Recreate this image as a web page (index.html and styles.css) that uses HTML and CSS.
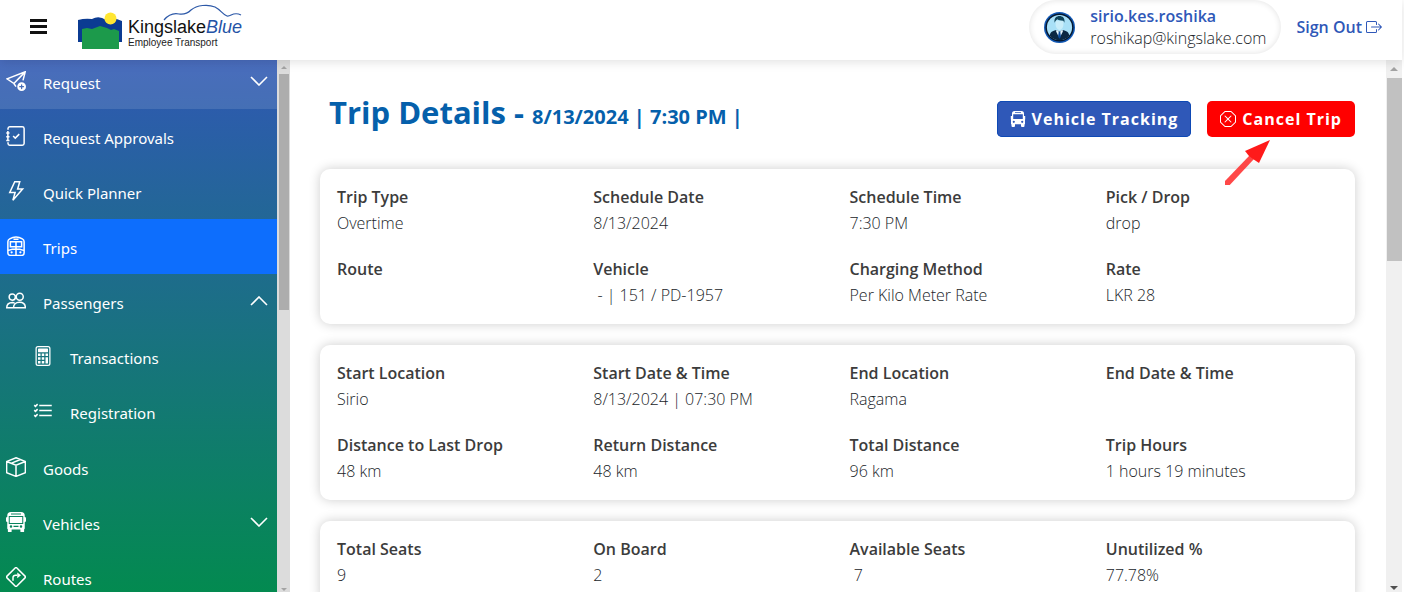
FILE: index.html
```
<!DOCTYPE html>
<html lang="en">
<head>
  <meta charset="UTF-8">
  <meta name="viewport" content="width=device-width, initial-scale=1">
  <title>Trip Details</title>
  <link rel="stylesheet" href="styles.css">
</head>
<body>
  <div class="app">
    <header class="topbar">
      <button type="button" class="menu-toggle" aria-label="Menu"><span></span><span></span><span></span></button>
      <svg class="logo" viewBox="0 0 168 46" role="img" aria-label="KingslakeBlue Employee Transport">
        <path fill="#0b3b92" d="M0 15q7-2 14-1 7-4 14 1 8-3 16 1v21H0z"/>
        <circle cx="32.500" cy="13.500" r="6" fill="#ffe632"/>
        <path fill="#1c9a4b" d="M4 24l5-1 5 1 8-3 7 2 4 2 3-1 5 2v18H4z"/>
        <path fill="none" stroke="#2d59a8" stroke-width="1.200" d="M86 15c5-6 10-7 15-6 6 1 9-1 12-4 6-5 17-6 24-3 6 3 7 7 12 9 4 1 6-5 14-1"/>
        <text class="logo-name" x="50" y="28">Kingslake<tspan class="logo-blue">Blue</tspan></text>
        <text class="logo-sub" x="50" y="41">Employee Transport</text>
      </svg>
      <div class="user">
        <svg class="avatar" viewBox="0 0 32 32" aria-hidden="true">
          <circle cx="16" cy="16" r="16" fill="#1158b5"/>
          <circle cx="16" cy="16" r="14.500" fill="#06182e"/>
          <circle cx="16" cy="16" r="13" fill="#a9e0f7"/>
          <path fill="#0b2742" d="M6 24.500c0-4 3-5 7-6l3 2 3-2c4 1 7 2 7 6a13 13 0 0 1-20 0z"/>
          <path fill="#e8f7fd" d="M13 18l3 3 3-3 .5 2-2.500 5h-2l-2.500-5z"/>
          <path fill="#0a4a9c" d="M15.200 20.500h1.600l.7 5-1.500 2-1.500-2z"/>
          <path fill="#c9edfa" d="M12 9h8v4c0 3-2 5.500-4 5.500S12 16 12 13z"/>
          <path fill="#0f4258" d="M11 11c-1-5 2-7 5-7s6 2 5 7l-1-2c-3 0-5-.5-6-1.500-1 .5-2 1-3 3.500z"/>
        </svg>
        <div class="user-text">
          <strong class="user-name">sirio.kes.roshika</strong>
          <span class="user-mail">roshikap@kingslake.com</span>
        </div>
      </div>
      <a class="sign-out" href="#">Sign Out
        <svg class="icon-sm" viewBox="0 0 16 16" aria-hidden="true"><path fill-rule="evenodd" d="M10 12.500a.5.5 0 0 1-.5.5h-8a.5.5 0 0 1-.5-.5v-9a.5.5 0 0 1 .5-.5h8a.5.5 0 0 1 .5.5v2a.5.5 0 0 0 1 0v-2A1.500 1.500 0 0 0 9.500 2h-8A1.500 1.500 0 0 0 0 3.500v9A1.500 1.500 0 0 0 1.500 14h8a1.500 1.500 0 0 0 1.500-1.500v-2a.5.5 0 0 0-1 0z"/><path fill-rule="evenodd" d="M15.854 8.354a.5.5 0 0 0 0-.708l-3-3a.5.5 0 0 0-.708.708L14.293 7.500H5.500a.5.5 0 0 0 0 1h8.793l-2.147 2.146a.5.5 0 0 0 .708.708z"/></svg>
      </a>
    </header>

    <div class="body">
      <nav class="sidebar" aria-label="Main">
        <ul class="nav">
          <li><a class="nav-link hover" href="#">
            <svg class="icon" viewBox="0 0 16 16" aria-hidden="true"><path class="line" d="M8 12.500 6.300 10 .8 6.300 15.400.6 13.600 7.500M6.300 10l9-9.300"/><path d="M16 12.500a3.500 3.500 0 1 1-7 0 3.500 3.500 0 0 1 7 0m-3.500-2a.5.5 0 0 0-.5.5v1h-1a.5.5 0 0 0 0 1h1v1a.5.5 0 0 0 1 0v-1h1a.5.5 0 0 0 0-1h-1v-1a.5.5 0 0 0-.5-.5"/></svg>
            <span>Request</span>
            <svg class="chevron" viewBox="0 0 18 10" aria-hidden="true"><path d="M1 1l8 8 8-8"/></svg>
          </a></li>
          <li><a class="nav-link" href="#">
            <svg class="icon" viewBox="0 0 16 16" aria-hidden="true"><path class="line" d="M1.600 3V2A1.500 1.500 0 0 1 3 .6h10A1.500 1.500 0 0 1 14.500 2v12a1.500 1.500 0 0 1-1.500 1.400H3A1.500 1.500 0 0 1 1.600 14v-1M5.700 8l1.700 1.700 3.200-3.200M.2 5.500h2.600M.2 8.500h2.600M.2 11.500h2.600M1.500 4v8"/></svg>
            <span>Request Approvals</span>
          </a></li>
          <li><a class="nav-link" href="#">
            <svg class="icon" viewBox="0 0 16 16" aria-hidden="true"><path class="line" d="M7 .6h4L9.300 6.400h4L5.500 15.400 7.300 9.200H3z"/></svg>
            <span>Quick Planner</span>
          </a></li>
          <li><a class="nav-link active" href="#" aria-current="page">
            <svg class="icon" viewBox="0 0 16 16" aria-hidden="true"><path class="line" d="M3.500 15.500a2 2 0 0 1-2-2V4.600c0-1 .4-1.800 1.400-2.300C6.500.1 9.500.1 13.100 2.300c1 .5 1.400 1.300 1.400 2.300v8.900a2 2 0 0 1-2 2zM8 4.500V15M3.500 4.500h9v4h-9zM6 2.600h4M2 11.500c4-1.500 8-1.500 12 0"/><circle cx="4.500" cy="13" r=".9"/><circle cx="11.500" cy="13" r=".9"/></svg>
            <span>Trips</span>
          </a></li>
          <li>
            <a class="nav-link" href="#">
              <svg class="icon" viewBox="0 0 16 16" aria-hidden="true"><path class="line" d="M5 2.300a2.500 2.500 0 1 0 0 5 2.500 2.500 0 0 0 0-5zM11 1.800a2.800 2.800 0 1 0 0 5.600 2.800 2.800 0 0 0 0-5.600zM6 13.400h9.500c0-2.500-1.700-4.400-4.700-4.400S6 10.900 6 13.400zM6 13.400H.6c0-2.300 1.400-4.100 4.600-4.200l1.700.3"/></svg>
              <span>Passengers</span>
              <svg class="chevron" viewBox="0 0 18 10" aria-hidden="true"><path d="M1 9l8-8 8 8"/></svg>
            </a>
            <ul class="subnav">
              <li><a class="nav-link" href="#">
                <svg class="icon" viewBox="0 0 16 16" aria-hidden="true"><path d="M12 1a1 1 0 0 1 1 1v12a1 1 0 0 1-1 1H4a1 1 0 0 1-1-1V2a1 1 0 0 1 1-1zM4 0a2 2 0 0 0-2 2v12a2 2 0 0 0 2 2h8a2 2 0 0 0 2-2V2a2 2 0 0 0-2-2z"/><path d="M4 2.500a.5.5 0 0 1 .5-.5h7a.5.5 0 0 1 .5.5v2a.5.5 0 0 1-.5.5h-7a.5.5 0 0 1-.5-.5zM4 6h2v2H4zm3 0h2v2H7zm3 0h2v2h-2zM4 9h2v2H4zm3 0h2v2H7zm-3 3h2v2H4zm3 0h2v2H7zm3-3h2v5h-2z"/></svg>
                <span>Transactions</span>
              </a></li>
              <li><a class="nav-link" href="#">
                <svg class="icon" viewBox="0 0 16 16" aria-hidden="true"><path class="line" d="M5 3.500h10M5 7.500h10M5 11.500h10M1 3.300l1 1 1.700-1.800M1 7.300l1 1 1.700-1.800M1 11.300l1 1 1.700-1.800"/></svg>
                <span>Registration</span>
              </a></li>
            </ul>
          </li>
          <li><a class="nav-link" href="#">
            <svg class="icon" viewBox="0 0 16 16" aria-hidden="true"><path class="line" d="M8 .6l7.500 3v9L8 15.500.5 12.600v-9zM.5 3.600 8 6.500l7.500-2.900M8 6.500v9M4.400 4.900l7.200-2.900"/></svg>
            <span>Goods</span>
          </a></li>
          <li><a class="nav-link" href="#">
            <svg class="icon" viewBox="0 0 16 16" aria-hidden="true"><path fill-rule="evenodd" d="M4 0h8a3 3 0 0 1 3 3v1a1 1 0 0 1 1 1v2a1 1 0 0 1-1 1v5a1 1 0 0 1-.5.866V15.500a.5.5 0 0 1-.5.500h-2a.5.5 0 0 1-.5-.5V14h-7v1.500a.5.5 0 0 1-.5.500H2a.5.5 0 0 1-.5-.5v-1.634A1 1 0 0 1 1 13V8a1 1 0 0 1-1-1V5a1 1 0 0 1 1-1V3a3 3 0 0 1 3-3zM2.200 3.200v6.400h11.600V3.200zM4 1.200v.8h8v-.8zM4 10.500a1 1 0 1 0 0 2 1 1 0 0 0 0-2zM12 10.500a1 1 0 1 0 0 2 1 1 0 0 0 0-2zM6 11v1h4v-1z"/><path d="M3 4h10v4.800H3z"/></svg>
            <span>Vehicles</span>
            <svg class="chevron" viewBox="0 0 18 10" aria-hidden="true"><path d="M1 1l8 8 8-8"/></svg>
          </a></li>
          <li><a class="nav-link" href="#">
            <svg class="icon" viewBox="0 0 16 16" aria-hidden="true"><path class="line" d="M7.300.8a1 1 0 0 1 1.400 0l6.500 6.500a1 1 0 0 1 0 1.400l-6.500 6.500a1 1 0 0 1-1.400 0L.8 8.700a1 1 0 0 1 0-1.400zM5.600 11V8.500a2 2 0 0 1 2-2H9"/><path d="M9 4.300l3 2.200-3 2.400z"/></svg>
            <span>Routes</span>
          </a></li>
        </ul>
      </nav>
      <div class="scrollbar side-scroll" aria-hidden="true">
        <span class="arrow-up"></span>
        <span class="thumb"></span>
        <span class="arrow-down"></span>
      </div>

      <main class="content">
        <div class="page-head">
          <h1>Trip Details - <small>8/13/2024 | 7:30 PM |</small></h1>
          <div class="actions">
            <button type="button" class="btn btn-track">
              <svg class="icon-sm" viewBox="0 0 16 16" aria-hidden="true"><path fill-rule="evenodd" d="M4.500 0h7A2.500 2.500 0 0 1 14 2.500V5h1.200v3.500H15v4.700h-.5V15a1 1 0 0 1-1 1H12a1 1 0 0 1-1-1v-1.800H5V15a1 1 0 0 1-1 1H2.500a1 1 0 0 1-1-1v-1.800H1V8.500H.8V5H2V2.500A2.500 2.500 0 0 1 4.500 0zM5 1.200V2h6v-.8zM3.200 3.300V8h9.600V3.300zM3.800 9.700a1.100 1.100 0 1 0 0 2.200 1.100 1.100 0 0 0 0-2.200zM12.200 9.700a1.100 1.100 0 1 0 0 2.200 1.100 1.100 0 0 0 0-2.200z"/></svg>
              Vehicle Tracking
            </button>
            <button type="button" class="btn btn-cancel">
              <svg class="icon-sm" viewBox="0 0 16 16" aria-hidden="true"><path d="M4.540.146A.5.5 0 0 1 4.893 0h6.214a.5.5 0 0 1 .353.146l4.394 4.394a.5.5 0 0 1 .146.353v6.214a.5.5 0 0 1-.146.353l-4.394 4.394a.5.5 0 0 1-.353.146H4.893a.5.5 0 0 1-.353-.146L.146 11.460A.5.5 0 0 1 0 11.107V4.893a.5.5 0 0 1 .146-.353zM5.100 1 1 5.100v5.800L5.100 15h5.800l4.100-4.100V5.100L10.900 1z"/><path d="M4.646 4.646a.5.5 0 0 1 .708 0L8 7.293l2.646-2.647a.5.5 0 0 1 .708.708L8.707 8l2.647 2.646a.5.5 0 0 1-.708.708L8 8.707l-2.646 2.647a.5.5 0 0 1-.708-.708L7.293 8 4.646 5.354a.5.5 0 0 1 0-.708"/></svg>
              Cancel Trip
            </button>
            <svg class="pointer" viewBox="0 0 45 45" aria-hidden="true"><path fill="#ff1a1a" fill-opacity=".8" d="M-3 44L25 15l4 4L2 48z"/><path fill="#ff1a1a" d="M45 0L20 11l4 5 4 3 6 4z"/></svg>
          </div>
        </div>

        <section class="card">
          <dl><dt>Trip Type</dt><dd>Overtime</dd></dl>
          <dl><dt>Schedule Date</dt><dd>8/13/2024</dd></dl>
          <dl><dt>Schedule Time</dt><dd>7:30 PM</dd></dl>
          <dl><dt>Pick / Drop</dt><dd>drop</dd></dl>
          <dl><dt>Route</dt><dd></dd></dl>
          <dl><dt>Vehicle</dt><dd>&nbsp;- | 151 / PD-1957</dd></dl>
          <dl><dt>Charging Method</dt><dd>Per Kilo Meter Rate</dd></dl>
          <dl><dt>Rate</dt><dd>LKR 28</dd></dl>
        </section>

        <section class="card">
          <dl><dt>Start Location</dt><dd>Sirio</dd></dl>
          <dl><dt>Start Date &amp; Time</dt><dd>8/13/2024 | 07:30 PM</dd></dl>
          <dl><dt>End Location</dt><dd>Ragama</dd></dl>
          <dl><dt>End Date &amp; Time</dt><dd></dd></dl>
          <dl><dt>Distance to Last Drop</dt><dd>48 km</dd></dl>
          <dl><dt>Return Distance</dt><dd>48 km</dd></dl>
          <dl><dt>Total Distance</dt><dd>96 km</dd></dl>
          <dl><dt>Trip Hours</dt><dd>1 hours 19 minutes</dd></dl>
        </section>

        <section class="card">
          <dl><dt>Total Seats</dt><dd>9</dd></dl>
          <dl><dt>On Board</dt><dd>2</dd></dl>
          <dl><dt>Available Seats</dt><dd>&nbsp;7</dd></dl>
          <dl><dt>Unutilized %</dt><dd>77.78%</dd></dl>
        </section>
      </main>
      <div class="scrollbar main-scroll" aria-hidden="true">
        <span class="arrow-up"></span>
        <span class="thumb"></span>
        <span class="arrow-down"></span>
      </div>
    </div>
  </div>
</body>
</html>
```
FILE: styles.css
```
* {
  box-sizing: border-box;
}
body {
  margin: 0;
  font-family: "Open Sans", "Noto Sans", sans-serif;
  font-size: 16px;
  color: #3c3c3c;
  background: #fff;
}
.app {
  display: flex;
  flex-direction: column;
  height: calc(100vh - 16px);
  padding-right: 2px;
  overflow: hidden;
}
a {
  text-decoration: none;
}
ul, dl, dd {
  margin: 0;
  padding: 0;
  list-style: none;
}

/* top bar */
.topbar {
  display: flex;
  align-items: flex-start;
  flex: none;
  height: 60px;
  padding: 0 20px 0 30px;
  position: relative;
  z-index: 2;
  box-shadow: 0 2px 10px rgba(0, 0, 0, 0.12);
  background: #fff;
}
.menu-toggle {
  display: flex;
  flex-direction: column;
  gap: 3px;
  width: 17px;
  margin: 19px 31px 0 0;
  padding: 0;
  border: none;
  background: none;
}
.menu-toggle span {
  height: 3px;
  background: #111;
}
.logo {
  width: 168px;
  height: 46px;
  margin: 5px auto 0 0;
  overflow: visible;
}
.logo-name {
  font: 18px "Liberation Sans", Arial, sans-serif;
  fill: #111;
}
.logo-blue {
  font-style: italic;
  fill: #2453a6;
}
.logo-sub {
  font: 10px "Liberation Sans", Arial, sans-serif;
  fill: #222;
}
.user {
  display: flex;
  align-items: center;
  gap: 15px;
  height: 54px;
  padding: 0 15px;
  border-radius: 27px;
  box-shadow: inset 0 0 6px rgba(0, 0, 0, 0.12);
}
.avatar {
  width: 31px;
  height: 31px;
}
.user-text {
  display: flex;
  flex-direction: column;
  line-height: 22px;
}
.user-name {
  color: #2f58b8;
  font-weight: 600;
}
.user-mail {
  color: #212529;
  font-weight: 300;
}
.sign-out {
  display: flex;
  align-items: center;
  gap: 4px;
  height: 54px;
  margin-left: 15px;
  color: #2f58b8;
  font-weight: 600;
}
.icon-sm {
  width: 16px;
  height: 16px;
  fill: currentColor;
}

.body {
  display: flex;
  flex: 1;
  min-height: 0;
}

/* sidebar */
.sidebar {
  flex: none;
  width: 277px;
  overflow: hidden;
  background: linear-gradient(#3058b4, #038a50);
}
.nav {
  margin-top: -6px;
}
.nav-link {
  display: flex;
  align-items: center;
  gap: 17px;
  height: 55px;
  padding: 2px 9px 0 6px;
  color: #fff;
  font-family: "Noto Sans", "Open Sans", sans-serif;
  font-size: 15px;
}
.nav-link.hover {
  background: rgba(255, 255, 255, 0.12);
}
.nav-link.active {
  background: #0d6efd;
}
.icon {
  width: 20px;
  height: 20px;
  margin-bottom: 4px;
  fill: #fff;
}
.icon .line {
  fill: none;
  stroke: #fff;
  stroke-width: 1.2;
}
.chevron {
  width: 18px;
  height: 10px;
  margin: 0 0 4px auto;
  fill: none;
  stroke: #fff;
  stroke-width: 1.6;
}
.subnav {
  padding-bottom: 1px;
}
.subnav .nav-link {
  padding-left: 33px;
}

/* scrollbars */
.scrollbar {
  display: flex;
  flex-direction: column;
  align-items: center;
  flex: none;
}
.side-scroll {
  width: 13px;
  padding: 6px 0 1px;
  background: #dcdcdc;
}
.side-scroll .thumb {
  width: 10px;
  height: 45%;
  margin-top: 5px;
  background: #adadad;
}
.main-scroll {
  width: 16px;
  padding: 7px 0 2px;
  background: #f0f0f0;
}
.main-scroll .thumb {
  width: 15px;
  height: 35%;
  margin-top: 7px;
  background: #c1c1c1;
}
.arrow-up, .arrow-down {
  border: 4px solid transparent;
}
.arrow-up {
  border-top: none;
  border-bottom-color: #a3a3a3;
}
.arrow-down {
  margin-top: auto;
  border-bottom: none;
  border-top-color: #505050;
}
.side-scroll .arrow-up, .side-scroll .arrow-down {
  border-width: 3px;
}
.side-scroll .arrow-up {
  border-top: none;
}
.side-scroll .arrow-down {
  border-bottom: none;
  border-top-color: #a3a3a3;
}

/* trip details */
.content {
  flex: 1;
  min-width: 0;
  padding: 0 31px 0 30px;
  overflow: hidden;
}
.page-head {
  display: flex;
  justify-content: space-between;
  align-items: flex-start;
  padding: 32px 0 32px 9px;
}
h1 {
  margin: 0;
  font-size: 31px;
  font-weight: 700;
  line-height: 40px;
  color: #0560ab;
}
h1 small {
  font-size: 20px;
}
.actions {
  display: flex;
  gap: 16px;
  position: relative;
  margin-top: 9px;
}
.btn {
  display: flex;
  align-items: center;
  gap: 6px;
  height: 36px;
  padding: 0 13px;
  border: none;
  border-radius: 5px;
  font: 700 16px "Open Sans", "Noto Sans", sans-serif;
  letter-spacing: 1px;
  color: #fff;
  cursor: pointer;
}
.btn-track {
  background: #2f58b8;
  box-shadow: inset 0 0 0 1px #0e49b5;
}
.btn-cancel {
  background: #f00;
}
.pointer {
  position: absolute;
  top: 39px;
  right: 85px;
  width: 45px;
  height: 45px;
  overflow: hidden;
}
.card {
  display: grid;
  grid-template-columns: repeat(4, 1fr);
  row-gap: 20px;
  margin-bottom: 21px;
  padding: 15px 5px 16px;
  border-radius: 10px;
  background: #fff;
  box-shadow: 0 0 12px rgba(0, 0, 0, 0.2);
}
.card dl {
  padding: 0 12px;
  line-height: 26px;
}
.card dt {
  font-weight: 600;
}
.card dd {
  min-height: 26px;
  color: #212529;
  font-weight: 300;
}
```
